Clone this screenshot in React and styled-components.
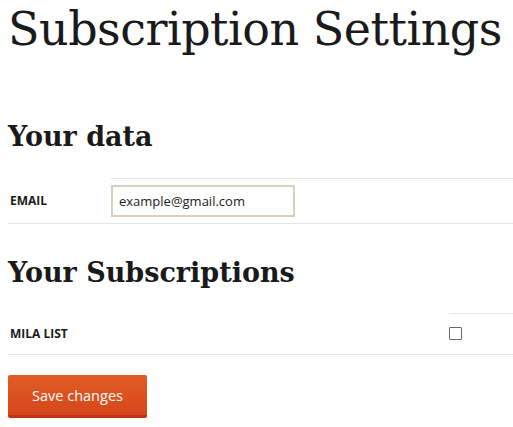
import React from 'react';
import styled, { createGlobalStyle } from 'styled-components';

const GlobalStyle = createGlobalStyle`
  html, body {
    margin: 0;
    padding: 0;
    background: #fff;
    overflow: hidden;
  }
  body {
    font-family: "Open Sans", "Liberation Sans", sans-serif;
    color: #1a1a1a;
  }
`;

const Page = styled.main`
  padding: 0 0 0 8px;
`;

const Title = styled.h1`
  font-family: "DejaVu Serif", serif;
  font-weight: normal;
  font-size: 46px;
  line-height: 58px;
  margin: 0;
  letter-spacing: -0.5px;
  color: #1a1a1a;
`;

const Heading = styled.h2`
  font-family: "DejaVu Serif", serif;
  font-weight: bold;
  font-size: 27px;
  line-height: 36px;
  margin: ${(p) => p.$top}px 0 0;
  color: #1a1a1a;
`;

const Table = styled.table`
  width: 100%;
  border-collapse: collapse;
  margin-top: ${(p) => p.$top}px;
`;

const Row = styled.tr`
  border-bottom: 1px solid #e6e6e6;
`;

const Label = styled.th`
  text-align: left;
  font-size: 12px;
  font-weight: 700;
  text-transform: uppercase;
  padding: 0 0 0 2px;
  width: ${(p) => p.$width}px;
  height: ${(p) => p.$height}px;
  color: #1a1a1a;
`;

const Cell = styled.td`
  border-top: 1px solid #e6e6e6;
  padding: 0;
  vertical-align: middle;
`;

const Input = styled.input`
  box-sizing: border-box;
  width: 184px;
  height: 32px;
  border: 2px solid #d6d0bc;
  padding: 0 6px;
  font-family: "Open Sans", "Liberation Sans", sans-serif;
  font-size: 13px;
  color: #222;
  outline: none;
  display: block;
`;

const Checkbox = styled.span`
  display: block;
  box-sizing: border-box;
  width: 13px;
  height: 13px;
  border: 1px solid #6a6a6a;
  border-radius: 1px;
`;

const SaveButton = styled.button`
  margin-top: 20px;
  width: 139px;
  height: 43px;
  border: none;
  border-bottom: 3px solid #bd3510;
  border-radius: 2px;
  background: linear-gradient(#e25d26, #d5461a);
  color: #fff;
  font-family: "Open Sans", "Liberation Sans", sans-serif;
  font-size: 14.5px;
  padding: 0;
  cursor: pointer;
`;

export default function App() {
  return (
    <>
      <GlobalStyle />
      <Page>
        <Title>Subscription Settings</Title>
        <Heading $top={61}>Your data</Heading>
        <Table $top={23}>
          <tbody>
            <Row>
              <Label $width={101} $height={44}>Email</Label>
              <Cell>
                <Input defaultValue="example@gmail.com" />
              </Cell>
            </Row>
          </tbody>
        </Table>
        <Heading $top={31}>Your Subscriptions</Heading>
        <Table $top={22}>
          <tbody>
            <Row>
              <Label $width={439} $height={41}>Mila List</Label>
              <Cell>
                <Checkbox />
              </Cell>
            </Row>
          </tbody>
        </Table>
        <SaveButton>Save changes</SaveButton>
      </Page>
    </>
  );
}
